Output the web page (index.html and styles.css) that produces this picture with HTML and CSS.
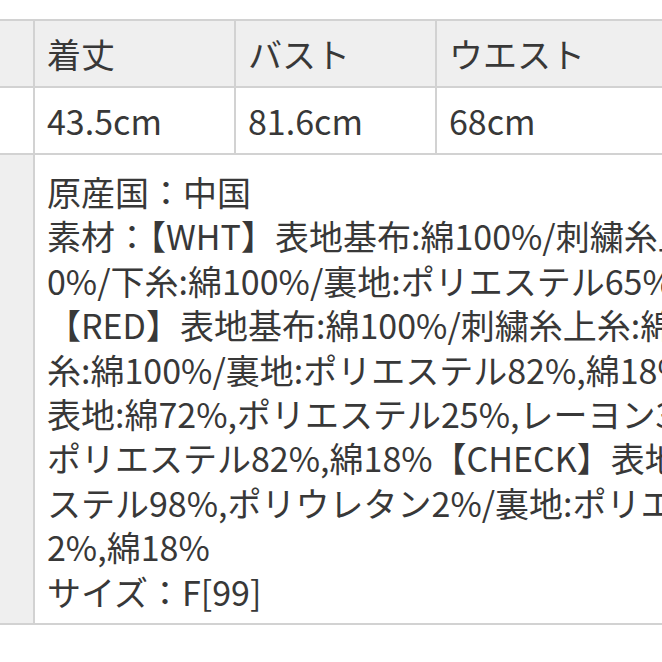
FILE: index.html
```html
<!DOCTYPE html>
<html lang="ja">
<head>
<meta charset="utf-8">
<link rel="stylesheet" href="styles.css">
</head>
<body>
<div class="wrap">
  <table class="spec">
    <tr class="head">
      <th class="side"></th>
      <th class="col">着丈</th>
      <th class="col">バスト</th>
      <th>ウエスト</th>
    </tr>
    <tr class="vals">
      <td class="side blank"></td>
      <td>43.5cm</td>
      <td>81.6cm</td>
      <td>68cm</td>
    </tr>
    <tr class="desc">
      <td class="side"></td>
      <td colspan="3">
        <div class="line">原産国：中国</div>
        <div class="line">素材：【WHT】表地基布:綿100%/刺繍糸上糸:綿10</div>
        <div class="line">0%/下糸:綿100%/裏地:ポリエステル65%,綿35%</div>
        <div class="line">【RED】表地基布:綿100%/刺繍糸上糸:綿100%/下</div>
        <div class="line">糸:綿100%/裏地:ポリエステル82%,綿18%【DENIM】</div>
        <div class="line">表地:綿72%,ポリエステル25%,レーヨン3%/裏地:</div>
        <div class="line">ポリエステル82%,綿18%【CHECK】表地:ポリエ</div>
        <div class="line">ステル98%,ポリウレタン2%/裏地:ポリエステル8</div>
        <div class="line">2%,綿18%</div>
        <div class="line">サイズ：F[99]</div>
      </td>
    </tr>
  </table>
</div>
</body>
</html>
```

FILE: styles.css
```css
html, body {
  margin: 0;
  padding: 0;
  background: #ffffff;
  overflow: hidden;
}
.wrap {
  padding-top: 19px;
  width: 662px;
  overflow: hidden;
}
.spec {
  border-collapse: collapse;
  table-layout: fixed;
  width: 1000px;
  margin-left: -2px;
  font-family: "Noto Sans CJK JP", "Noto Sans", sans-serif;
  font-size: 34px;
  color: #383838;
}
.spec th, .spec td {
  border: 2px solid #d2d2d2;
  text-align: left;
  font-weight: 400;
  padding: 0 0 0 12px;
  vertical-align: middle;
  white-space: nowrap;
}
.spec .side {
  width: 33px;
  padding: 0;
  background: #efefef;
}
.spec .side.blank {
  background: #ffffff;
}
.spec .col {
  width: 187px;
}
.head th {
  background: #efefef;
  height: 65px;
}
.vals td {
  height: 65px;
}
.desc td {
  vertical-align: top;
  padding-top: 15px;
  padding-bottom: 9px;
}
.line {
  line-height: 44.4px;
  height: 44.4px;
}
```
